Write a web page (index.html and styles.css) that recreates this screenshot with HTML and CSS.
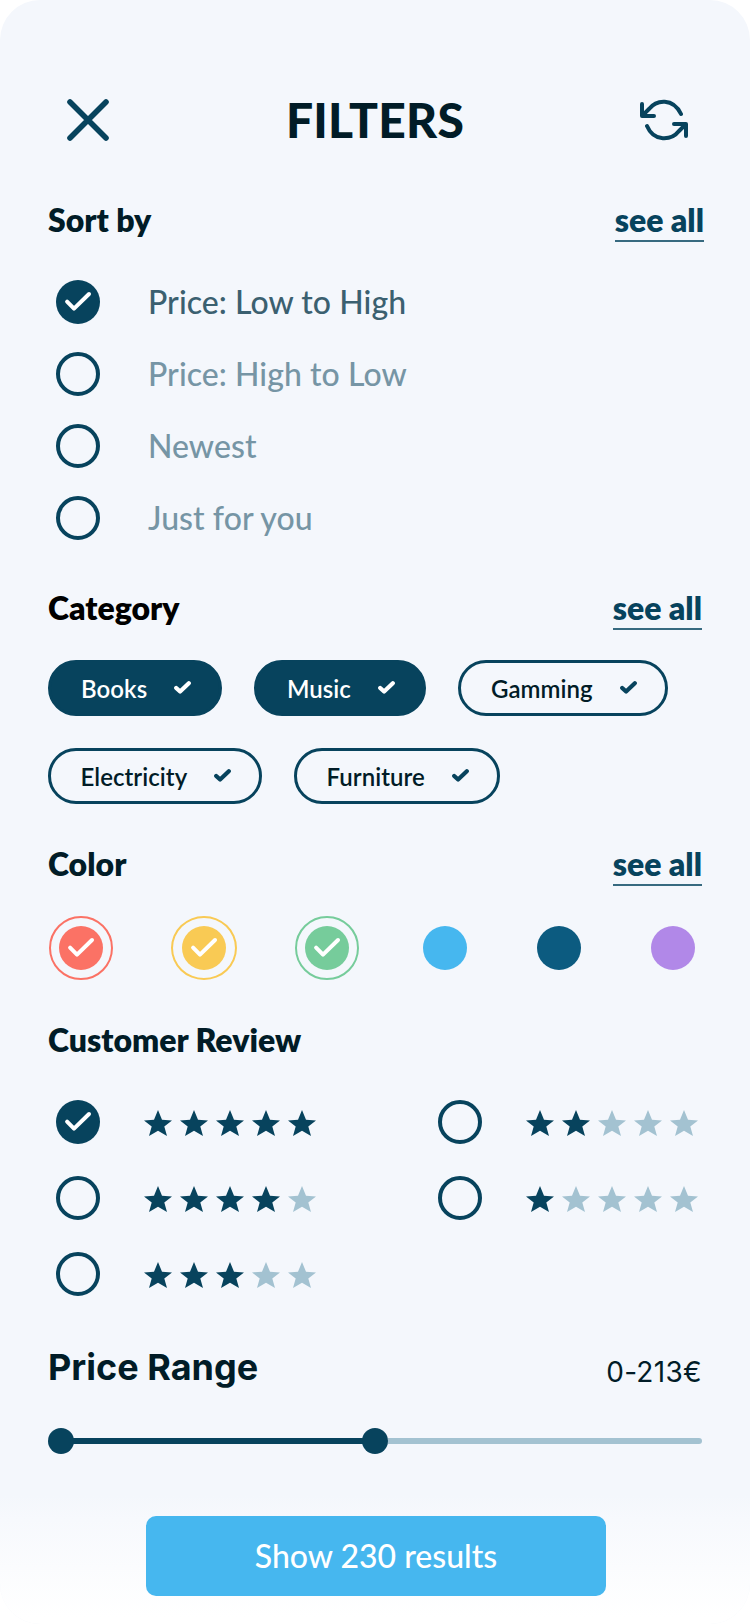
FILE: index.html
```html
<!DOCTYPE html>
<html lang="en">
<head>
<meta charset="utf-8">
<title>Filters</title>
<link rel="stylesheet" href="styles.css">
</head>
<body>
<svg class="defs" width="0" height="0" aria-hidden="true">
  <symbol id="tick" viewBox="0 0 44 44"><path d="M11.1 21.6L18 28.6L33 14" fill="none" stroke="#fff" stroke-width="4" stroke-linecap="round" stroke-linejoin="round"/></symbol>
  <symbol id="chip-tick" viewBox="0 0 17 13"><path d="M2.2 6.9L6.1 10.6L14.8 2.3" fill="none" stroke="currentColor" stroke-width="4.2" stroke-linecap="round" stroke-linejoin="round"/></symbol>
  <symbol id="star" viewBox="0 0 28 26"><path d="M14 0L18 9.7L28 10.4L20.3 16.6L23 26L14 20.8L5 26L7.7 16.6L0 10.4L10 9.7Z" fill="currentColor"/></symbol>
</svg>
<main class="screen">
  <header class="header">
    <svg class="close" width="48" height="48" viewBox="0 0 48 48"><path d="M6 6L42 42M42 6L6 42" stroke="currentColor" stroke-width="5.6" stroke-linecap="round"/></svg>
    <h1 class="title">FILTERS</h1>
    <svg class="reset" width="48" height="48" viewBox="0 0 48 48"><path d="M2 8V20H14M2.6 19.4L9 13C16.500 3.500 33 1.500 41 18M46 40V28H34M45.400 28.600L39 35C31.500 44.500 14 46.500 7 30" fill="none" stroke="currentColor" stroke-width="4" stroke-linecap="round" stroke-linejoin="round"/></svg>
  </header>

  <section class="sort">
    <div class="section-head section-head-wide"><h2 class="heading">Sort by</h2><a class="link">see all</a></div>
    <div class="options">
      <div class="option option-on"><span class="radio radio-on"><svg width="44" height="44"><use href="#tick"/></svg></span><span class="label">Price: Low to High</span></div>
      <div class="option"><span class="radio"></span><span class="label">Price: High to Low</span></div>
      <div class="option"><span class="radio"></span><span class="label">Newest</span></div>
      <div class="option"><span class="radio"></span><span class="label">Just for you</span></div>
    </div>
  </section>

  <section class="category">
    <div class="section-head"><h2 class="heading heading-black">Category</h2><a class="link">see all</a></div>
    <div class="chips">
      <div class="chip chip-on chip-books"><span>Books</span><svg width="17" height="13"><use href="#chip-tick"/></svg></div>
      <div class="chip chip-on chip-music"><span>Music</span><svg width="17" height="13"><use href="#chip-tick"/></svg></div>
      <div class="chip chip-gamming"><span>Gamming</span><svg width="17" height="13"><use href="#chip-tick"/></svg></div>
      <div class="chip chip-electricity"><span>Electricity</span><svg width="17" height="13"><use href="#chip-tick"/></svg></div>
      <div class="chip chip-furniture"><span>Furniture</span><svg width="17" height="13"><use href="#chip-tick"/></svg></div>
    </div>
  </section>

  <section class="color">
    <div class="section-head"><h2 class="heading">Color</h2><a class="link">see all</a></div>
    <div class="swatches">
      <div class="ring red"><span class="swatch"><svg width="44" height="44"><use href="#tick"/></svg></span></div>
      <div class="ring ring-large yellow"><span class="swatch"><svg width="44" height="44"><use href="#tick"/></svg></span></div>
      <div class="ring green"><span class="swatch"><svg width="44" height="44"><use href="#tick"/></svg></span></div>
      <span class="swatch sky"></span>
      <span class="swatch navy"></span>
      <span class="swatch purple"></span>
    </div>
  </section>

  <section class="review">
    <div class="section-head"><h2 class="heading">Customer Review</h2></div>
    <div class="ratings">
      <div class="rating"><span class="radio radio-on"><svg width="44" height="44"><use href="#tick"/></svg></span><div class="stars"><svg class="star"><use href="#star"/></svg><svg class="star"><use href="#star"/></svg><svg class="star"><use href="#star"/></svg><svg class="star"><use href="#star"/></svg><svg class="star"><use href="#star"/></svg></div></div>
      <div class="rating"><span class="radio"></span><div class="stars"><svg class="star"><use href="#star"/></svg><svg class="star"><use href="#star"/></svg><svg class="star star-off"><use href="#star"/></svg><svg class="star star-off"><use href="#star"/></svg><svg class="star star-off"><use href="#star"/></svg></div></div>
      <div class="rating"><span class="radio"></span><div class="stars"><svg class="star"><use href="#star"/></svg><svg class="star"><use href="#star"/></svg><svg class="star"><use href="#star"/></svg><svg class="star"><use href="#star"/></svg><svg class="star star-off"><use href="#star"/></svg></div></div>
      <div class="rating"><span class="radio"></span><div class="stars"><svg class="star"><use href="#star"/></svg><svg class="star star-off"><use href="#star"/></svg><svg class="star star-off"><use href="#star"/></svg><svg class="star star-off"><use href="#star"/></svg><svg class="star star-off"><use href="#star"/></svg></div></div>
      <div class="rating"><span class="radio"></span><div class="stars"><svg class="star"><use href="#star"/></svg><svg class="star"><use href="#star"/></svg><svg class="star"><use href="#star"/></svg><svg class="star star-off"><use href="#star"/></svg><svg class="star star-off"><use href="#star"/></svg></div></div>
    </div>
  </section>

  <section class="price">
    <div class="price-head"><h2 class="price-title">Price Range</h2><span class="price-value">0-213€</span></div>
    <div class="slider"><span class="knob"></span><span class="track"></span><span class="knob"></span><span class="track track-rest"></span></div>
  </section>

  <footer class="footer"><button class="submit">Show 230 results</button></footer>
</main>
</body>
</html>
```
FILE: styles.css
```css
* { box-sizing: border-box; }
body { margin: 0; background: #fff; font-family: Lato, "Liberation Sans", sans-serif; }
h1, h2 { margin: 0; }
svg { display: block; flex: none; }
.defs { position: absolute; }

.screen { width: 750px; height: 1624px; border-radius: 40px; background: #f4f7fc; color: #011c27; overflow: hidden; display: flex; flex-direction: column; }
.header { height: 200px; padding: 96px 62px 56px 64px; display: flex; justify-content: space-between; align-items: center; color: #07435d; }
.title { font-size: 48px; line-height: 58px; font-weight: 900; letter-spacing: 0.2px; margin-right: 2px; color: #011c27; }

.section-head { height: 42px; margin: 0 48px; display: flex; justify-content: space-between; align-items: flex-start; }
.section-head-wide { margin-right: 46px; }
.heading, .link { padding-top: 1px; font-size: 32px; line-height: 38px; font-weight: 800; }
.heading-black { color: #000; }
.link { height: 42px; color: #07435d; border-bottom: 2px solid #376a80; }

.sort { height: 388px; }
.options { margin: 38px 56px 0; display: grid; gap: 28px; }
.option { height: 44px; display: flex; align-items: center; gap: 48px; color: #7695a5; }
.option-on { color: #3b6070; }
.label { font-size: 32px; line-height: 38px; font-weight: 500; letter-spacing: 0.05px; }
.radio { width: 44px; height: 44px; flex: none; border: 4px solid #07435d; border-radius: 50%; }
.radio-on { border: 0; background: #07435d; }

.category { height: 256px; }
.chips { margin: 30px 48px 0; display: flex; flex-wrap: wrap; gap: 32px; }
.chip { height: 56px; padding: 0 28px 0 30px; display: flex; align-items: center; justify-content: space-between; border: 3px solid #07435d; border-radius: 28px; font-size: 24px; line-height: 29px; font-weight: 600; letter-spacing: 0.05px; }
.chip svg { color: #07435d; margin-top: -1px; }
.chip-on, .chip-on svg { background: #07435d; color: #fff; }
.chip-books { width: 174px; }
.chip-music { width: 172px; }
.chip-gamming { width: 210px; }
.chip-electricity { width: 214px; padding-left: 29.500px; }
.chip-furniture { width: 206px; padding-left: 29.500px; }

.color { height: 176px; }
.swatches { height: 66px; margin: 29px 49px 0; display: grid; grid-template-columns: 122px 124px 127.670px 114px 114px 44px; align-items: center; }
.ring { width: 64px; height: 64px; display: grid; place-items: center; border: 2px solid; border-radius: 50%; }
.ring-large { width: 66px; height: 64px; }
.swatch { width: 44px; height: 44px; border-radius: 50%; background: currentColor; }
.red { color: #fb7265; }
.yellow { color: #f9ca54; }
.green { color: #76cc9b; }
.sky { color: #46b7ef; }
.navy { color: #0c5b80; }
.purple { color: #b188e8; }

.review { height: 328px; }
.ratings { margin: 38px 52px 0 56px; display: grid; grid-template-columns: 382px 1fr; row-gap: 32px; }
.rating { height: 44px; display: flex; gap: 44px; align-items: center; }
.stars { display: flex; gap: 8px; padding-top: 2px; }
.star { width: 28px; height: 26px; color: #07435d; }
.star-off { color: #a3c2d1; }

.price { height: 136px; padding: 0 48px; }
.price-head { height: 80px; display: flex; justify-content: space-between; align-items: flex-start; font-family: Inter, "Liberation Sans", sans-serif; }
.price-title { margin-top: -3px; font-size: 36px; line-height: 44px; font-weight: 700; }
.price-value { margin-top: 7px; font-size: 28px; line-height: 34px; font-weight: 400; letter-spacing: 0.3px; }
.slider { height: 26px; display: flex; align-items: center; }
.knob { width: 26px; height: 26px; flex: none; border-radius: 50%; background: #07435d; }
.track { flex: 0 0 292px; height: 6px; margin: 0 -2px; background: #07435d; }
.track-rest { flex: 1; margin: 0; background: #a3c2d1; border-radius: 0 3px 3px 0; }

.footer { height: 140px; padding-top: 32px; display: flex; justify-content: center; align-items: flex-start; background: linear-gradient(#f4f7fc 8%, #f7f9fd 25%, #fff 95%); }
.submit { width: 460px; height: 80px; margin-left: 2px; padding: 0; border: 0; border-radius: 10px; background: #46b7ef; color: #fff; font: 500 32px/38px Lato, "Liberation Sans", sans-serif; }
```
